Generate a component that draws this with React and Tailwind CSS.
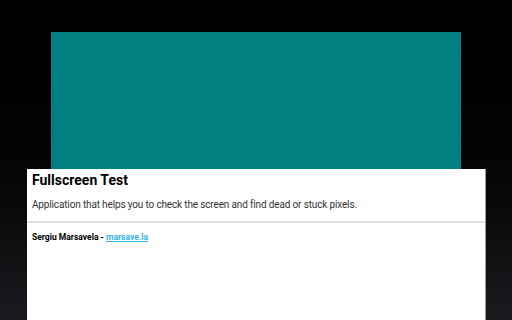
import React from 'react';

const App = () => {
    return (
        <div className="w-[512px] h-[320px] overflow-hidden flex flex-col bg-gradient-to-b from-[#000000] to-[#191b1e] font-['Roboto',sans-serif]">
            {/* Teal test surface */}
            <div className="mt-[32px] ml-[51px] w-[410px] h-[137px] shrink-0 bg-[#008080]" />

            {/* Info card */}
            <div className="ml-[27px] w-[459px] flex-1 bg-white border-r border-[#9a9a9a] flex flex-col">
                <div className="px-[5px] pt-[2px]">
                    <h1 className="text-[14px] leading-[18px] font-bold text-black">Fullscreen Test</h1>
                    <p className="mt-[9px] text-[10px] leading-[14px] tracking-[-0.15px] text-[#333333]">
                        Application that helps you to check the screen and find dead or stuck pixels.
                    </p>
                </div>
                <div className="mt-[9px] h-[2px] bg-[#e2e2e2]" />
                <div className="px-[5px] pt-[8px] text-[8.5px] leading-[12px] font-bold text-black">
                    Sergiu Marsavela - <a href="#" className="text-[#33b5e5] underline">marsave.la</a>
                </div>
            </div>
        </div>
    );
};

export default App;
